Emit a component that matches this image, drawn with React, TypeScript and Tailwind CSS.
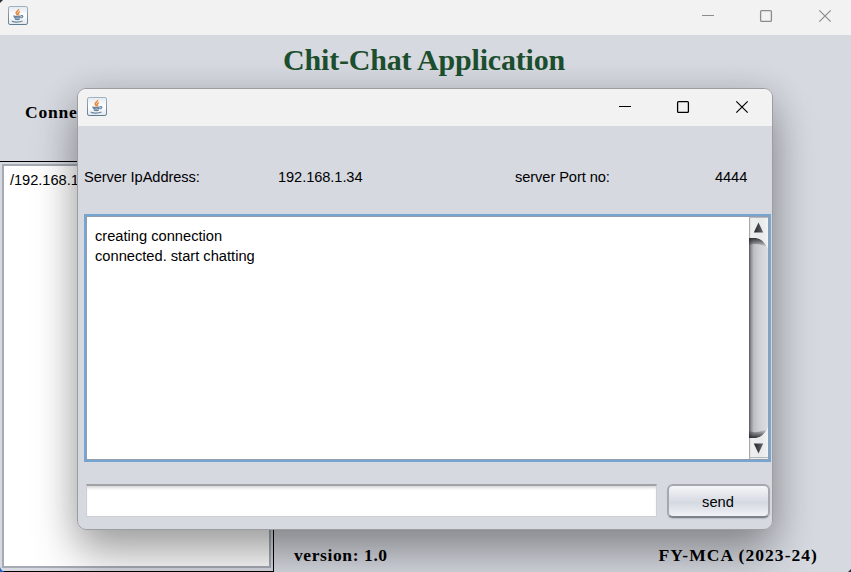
import type { ReactNode } from "react";

function JavaIcon() {
  return (
    <svg width="20" height="19" viewBox="0 0 20 19" className="block shrink-0">
      <defs>
        <linearGradient id="tile" x1="0" y1="0" x2="0" y2="1">
          <stop offset="0" stopColor="#e4eaef" />
          <stop offset=".5" stopColor="#ffffff" />
          <stop offset="1" stopColor="#e3e7eb" />
        </linearGradient>
        <linearGradient id="edge" x1="0" y1="0" x2="0" y2="1">
          <stop offset="0" stopColor="#9fb1c0" />
          <stop offset="1" stopColor="#5f7b91" />
        </linearGradient>
      </defs>
      <rect x=".5" y=".5" width="19" height="18" rx="1.6" fill="url(#tile)" stroke="url(#edge)" />
      <path d="M10.6 3c.7 1.6-3.7 2.7-2.2 4.5l1.2 1.7M12 5.6c-1.7.7-2.4 1.3-1.5 2.2.4.5 0 1-.5 1.5" fill="none" stroke="#e88a3f" strokeWidth="1.5" />
      <path d="M5.2 9.8c1.8.7 5.8.7 8 0M6 11.4c1.8.8 4.6.8 6.5 0M6.8 13c1.5.7 3.7.7 5 0M13 9.7c2.6-.5 2.4 1.7-.2 2.3M4.3 14.8c-.8 1.5 7.5 1.7 10.2.2" fill="none" stroke="#6785a0" strokeWidth="1.25" />
    </svg>
  );
}

function TitleBar({ height, color, padding }: { height: string; color: string; padding: string }) {
  return (
    <header className={`flex justify-between bg-[#f2f2f2] ${height} ${color} ${padding}`}>
      <JavaIcon />
      <svg width="130" height="14" viewBox="0 0 130 14" fill="none" stroke="currentColor" className="mt-[3px] block">
        <path d="M0 6.5h12" />
        <rect x="58.6" y="1.6" width="10.8" height="10.8" rx="1" strokeWidth="1.3" />
        <path d="M117.3 1.3l11.4 11.4M128.7 1.3l-11.4 11.4" strokeWidth="1.2" />
      </svg>
    </header>
  );
}

function SerifLabel({ children, className }: { children: ReactNode; className: string }) {
  return (
    <span className={`font-['Liberation_Serif',serif] text-[17.5px] leading-5 font-bold whitespace-nowrap ${className}`}>
      {children}
    </span>
  );
}

function ScrollBar() {
  return (
    <svg width="19" height="242" viewBox="0 0 19 242" className="block shrink-0">
      <defs>
        <linearGradient id="track" x1="0" y1="0" x2="1" y2="0">
          <stop offset="0" stopColor="#55575b" />
          <stop offset=".1" stopColor="#8b8d92" />
          <stop offset=".25" stopColor="#bcbec4" />
          <stop offset=".55" stopColor="#ced0d6" />
          <stop offset="1" stopColor="#dcdee4" />
        </linearGradient>
        <linearGradient id="cap" x1="0" y1="0" x2="1" y2="0">
          <stop offset="0" stopColor="#d5d8da" />
          <stop offset=".15" stopColor="#eef0f0" />
          <stop offset=".65" stopColor="#e6eaea" />
          <stop offset="1" stopColor="#f1f3f3" />
        </linearGradient>
        <linearGradient id="shadeTop" x1="0" y1="0" x2="0" y2="1">
          <stop offset="0" stopColor="#222428" stopOpacity=".9" />
          <stop offset="1" stopColor="#222428" stopOpacity="0" />
        </linearGradient>
        <linearGradient id="shadeBottom" x1="0" y1="1" x2="0" y2="0">
          <stop offset="0" stopColor="#222428" stopOpacity=".9" />
          <stop offset="1" stopColor="#222428" stopOpacity="0" />
        </linearGradient>
        <linearGradient id="arrow" x1="0" y1="0" x2="1" y2="0">
          <stop offset="0" stopColor="#24272a" />
          <stop offset="1" stopColor="#60656a" />
        </linearGradient>
      </defs>
      <rect width="19" height="242" fill="url(#track)" />
      <path d="M0 21h7q7 1 11 9Q8 25 0 28z" fill="url(#shadeTop)" />
      <path d="M0 221h7q7-1 11-9Q8 217 0 214z" fill="url(#shadeBottom)" />
      <path d="M0 0h19v32q-4-10-12-11H0z" fill="url(#cap)" />
      <path d="M0 242h19v-32q-4 10-12 11H0z" fill="url(#cap)" />
      <path d="M.5 0v21M.5 221v21" stroke="#a6a9ad" />
      <path d="M0 .5h19M0 240.5h19" stroke="#b5b8bb" />
      <path d="M4.8 15.5L9.5 5.5 14.2 15.5z" fill="url(#arrow)" />
      <path d="M4.8 226.5l4.7 10 4.7-10z" fill="url(#arrow)" />
    </svg>
  );
}

function ChatWindow() {
  return (
    <section className="absolute top-[88px] left-[77px] flex h-[442px] w-[696px] flex-col overflow-hidden rounded-[9px] border border-[#9c9da1] bg-[#d6d9e0] text-[14.67px] leading-5">
      <TitleBar height="h-[37px]" color="text-black" padding="pt-[8px] pl-[9px] pr-[23px]" />
      <div className="mt-[41px] flex h-5 pl-[6px] tracking-[-0.09px] whitespace-nowrap">
        <span className="w-[194px]">Server IpAddress:</span>
        <span className="w-[237px]">192.168.1.34</span>
        <span className="w-[200px]">server Port no:</span>
        <span>4444</span>
      </div>
      <div className="mt-[27px] ml-[6px] flex h-[248px] w-[687px] border-2 border-[#75a5d1] bg-white">
        <div className="flex grow border border-r-0 border-[#929eaf]">
          <div className="grow pt-[9px] pl-[8px]">
            <p>creating connection</p>
            <p>connected. start chatting</p>
          </div>
          <ScrollBar />
        </div>
        <div className="w-px bg-[#929eaf]" />
      </div>
      <div className="mt-[22px] flex gap-[10px] pl-[8px]">
        <input
          aria-label="Message"
          className="h-[33px] w-[571px] border border-t-2 border-[#cdcfd2] border-t-[#a0a2a6] bg-white px-2 shadow-[inset_0_3px_3px_-1px_#d8d8da] outline-none"
        />
        <button className="h-[34px] w-[103px] rounded-[6px] border-2 border-[#a5a8af] border-b-[#7d8189] bg-linear-to-b from-[#f5f6f8] via-[#d5d9e1] via-55% to-[#f0f2f6] pt-[2px] pr-px shadow-[0_1px_1px_#b9bcc3]">
          send
        </button>
      </div>
    </section>
  );
}

export default function App() {
  return (
    <div className="relative flex h-[572px] w-[851px] flex-col overflow-hidden bg-[#d6d9e0] font-['Liberation_Sans',Arial,sans-serif] text-black">
      <TitleBar height="h-[35px]" color="text-[#8c8c8c]" padding="pt-[6px] pl-[8px] pr-[19px]" />
      <h1 className="h-[51px] pt-[7px] pl-[283px] font-['Liberation_Serif',serif] text-[30px] leading-9 font-bold tracking-[-0.18px] whitespace-nowrap text-[#1d4f2f]">
        Chit-Chat Application
      </h1>
      <div className="flex grow">
        <aside className="flex w-[274px] flex-col">
          <SerifLabel className="h-[75px] pt-[16px] pl-[25px] tracking-[0.8px]">Conne</SerifLabel>
          <div className="flex h-[411px] border border-l-0 border-black pt-[2px] pr-[2px] pb-[3px] pl-[2px]">
            <div className="grow border-2 border-[#a5aab4] bg-white pt-[4px] pl-[6px] text-[14.67px] leading-5 tracking-[-0.05px]">
              /192.168.1
            </div>
          </div>
        </aside>
        <footer className="flex grow items-end justify-between pr-[33px] pb-[7px] pl-[20px]">
          <SerifLabel className="tracking-[0.6px]">version: 1.0</SerifLabel>
          <SerifLabel className="tracking-[1.05px]">FY-MCA (2023-24)</SerifLabel>
        </footer>
      </div>
      <div className="absolute top-[88px] left-[77px] h-[442px] w-[696px] rounded-[9px] shadow-[0_26px_46px_rgba(0,0,0,0.3),0_4px_34px_rgba(0,0,0,0.16)]" />
      <ChatWindow />
      <svg width="851" height="572" className="pointer-events-none absolute inset-0">
        <path d="M0 0h3L0 3z" fill="#26313b" />
        <path d="M0 567q1 4 5 5H0z" fill="#245fc4" />
        <path d="M851 569l-3 3h3z" fill="#26313b" />
      </svg>
    </div>
  );
}
